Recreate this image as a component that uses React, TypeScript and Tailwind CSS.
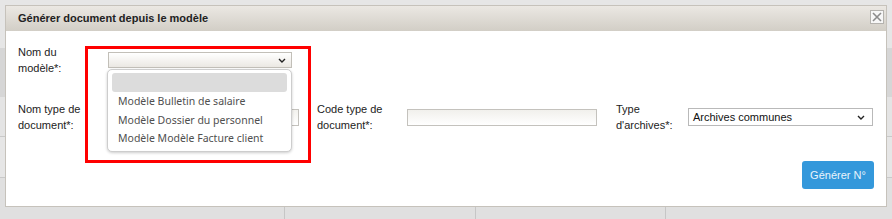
import React from "react";

const sans = "font-['Liberation_Sans',Arial,sans-serif]";

function Chevron() {
  return (
    <svg width="8" height="5" viewBox="0 0 8 5" className="shrink-0">
      <polyline points="1,1 4,4 7,1" fill="none" stroke="#222" strokeWidth="1.4" />
    </svg>
  );
}

function Label({ lines, width }: { lines: string[]; width: string }) {
  return (
    <div className={`${width} shrink-0 text-[11px] leading-[16px] text-[#222]`}>
      {lines.map((l) => (
        <div key={l}>{l}</div>
      ))}
    </div>
  );
}

export default function App() {
  const options = ["Modèle Bulletin de salaire", "Modèle Dossier du personnel", "Modèle Modèle Facture client"];

  return (
    <div className={`relative w-[892px] h-[219px] overflow-hidden bg-[#e6e6e6] ${sans}`}>
      {/* page behind the dialog */}
      <div className="flex flex-col">
        <div className="h-[48px] bg-[#e6e6e6]" />
        <div className="h-[49px] bg-[#d6d6d6]" />
        <div className="h-[40px] bg-[#e4e4e4] border-b border-[#c9c9c9]" />
        <div className="h-[41px] bg-[#e6e6e6] border-b border-[#c9c9c9]" />
        <div className="h-[41px] bg-[#e0e0e0] grid grid-cols-[285px_191px_190px_1fr]">
          <div className="border-r border-[#c6c6c6]" />
          <div className="border-r border-[#c6c6c6]" />
          <div className="border-r border-[#c6c6c6]" />
          <div />
        </div>
      </div>

      {/* dialog */}
      <div className="absolute left-[5px] top-[5px] w-[882px] h-[202px] border border-[#c6c2bb] bg-white">
        <div className="h-[25px] px-[12px] flex items-center justify-between bg-gradient-to-b from-[#ebe8e3] to-[#d2cec6]">
          <span className="text-[11px] font-bold text-[#222]">Générer document depuis le modèle</span>
          <div className="w-[14px] h-[14px] -mr-[10px] -mt-[4px] border border-[#b4b2ae] bg-[#f7f7f7] flex items-center justify-center">
            <svg width="10" height="10" viewBox="0 0 10 10">
              <path d="M1 1 L9 9 M9 1 L1 9" stroke="#8c8c8c" strokeWidth="1.6" />
            </svg>
          </div>
        </div>

        <div className="px-[12px] pt-[13px]">
          <div className="flex items-center h-[32px]">
            <Label lines={["Nom du", "modèle*:"]} width="w-[90px]" />
            <div className="w-[184px] h-[16px] border border-[#c2bfb8] bg-gradient-to-b from-white to-[#ebe8e3] flex items-center justify-end pr-[5px]">
              <Chevron />
            </div>
          </div>

          <div className="flex items-center h-[32px] mt-[25px]">
            <Label lines={["Nom type de", "document*:"]} width="w-[90px]" />
            <div className="w-[191px] h-[17px] border border-[#c4c2bd] bg-gradient-to-b from-[#f3f2ee] to-white" />
            <div className="w-[18px] shrink-0" />
            <Label lines={["Code type de", "document*:"]} width="w-[90px]" />
            <div className="w-[190px] h-[17px] border border-[#c4c2bd] bg-gradient-to-b from-[#f1f0ec] to-white" />
            <div className="w-[19px] shrink-0" />
            <Label lines={["Type", "d'archives*:"]} width="w-[72px]" />
            <div className="w-[185px] h-[18px] border border-[#b9b9b9] bg-white flex items-center justify-between pl-[4px] pr-[7px]">
              <span className="text-[11px] text-[#111]">Archives communes</span>
              <Chevron />
            </div>
          </div>

          <div className="flex justify-end mt-[28px]">
            <button className="h-[28px] w-[72px] rounded-[3px] bg-[#3498db] text-[11px] text-[#eaf4fb]">
              Générer N°
            </button>
          </div>
        </div>

        {/* open select list */}
        <div className="absolute left-[101px] top-[63px] w-[185px] h-[83px] rounded-[5px] border border-[#cdcdcd] bg-white shadow-[0_1px_3px_rgba(0,0,0,0.2)] px-[4px] pt-[3px] font-['Noto_Sans',sans-serif] text-[10.5px] text-[#4f4f4f]">
          <div className="h-[19px] rounded-[3px] bg-[#dcdcdc]" />
          {options.map((o) => (
            <div key={o} className="h-[18.5px] leading-[18.5px] pl-[6px] whitespace-nowrap">
              {o}
            </div>
          ))}
        </div>

        {/* highlight frame */}
        <div className="absolute left-[79px] top-[40px] w-[226px] h-[117px] border-[3px] border-[#ff0000]" />
      </div>
    </div>
  );
}
